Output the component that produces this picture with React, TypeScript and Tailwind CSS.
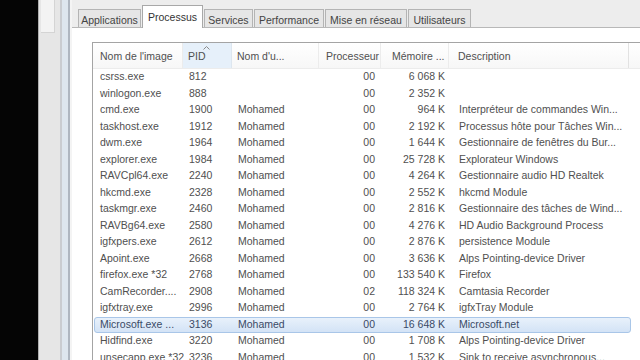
import React from "react";

type Row = { name: string; pid: string; user: string; cpu: string; mem: string; desc: string; sel?: boolean };

const rows: Row[] = [
  { name: "csrss.exe", pid: "812", user: "", cpu: "00", mem: "6 068 K", desc: "" },
  { name: "winlogon.exe", pid: "888", user: "", cpu: "00", mem: "2 352 K", desc: "" },
  { name: "cmd.exe", pid: "1900", user: "Mohamed", cpu: "00", mem: "964 K", desc: "Interpréteur de commandes Win..." },
  { name: "taskhost.exe", pid: "1912", user: "Mohamed", cpu: "00", mem: "2 192 K", desc: "Processus hôte pour Tâches Win..." },
  { name: "dwm.exe", pid: "1964", user: "Mohamed", cpu: "00", mem: "1 644 K", desc: "Gestionnaire de fenêtres du Bur..." },
  { name: "explorer.exe", pid: "1984", user: "Mohamed", cpu: "00", mem: "25 728 K", desc: "Explorateur Windows" },
  { name: "RAVCpl64.exe", pid: "2240", user: "Mohamed", cpu: "00", mem: "4 264 K", desc: "Gestionnaire audio HD Realtek" },
  { name: "hkcmd.exe", pid: "2328", user: "Mohamed", cpu: "00", mem: "2 552 K", desc: "hkcmd Module" },
  { name: "taskmgr.exe", pid: "2460", user: "Mohamed", cpu: "00", mem: "2 816 K", desc: "Gestionnaire des tâches de Wind..." },
  { name: "RAVBg64.exe", pid: "2580", user: "Mohamed", cpu: "00", mem: "4 276 K", desc: "HD Audio Background Process" },
  { name: "igfxpers.exe", pid: "2612", user: "Mohamed", cpu: "00", mem: "2 876 K", desc: "persistence Module" },
  { name: "Apoint.exe", pid: "2668", user: "Mohamed", cpu: "00", mem: "3 636 K", desc: "Alps Pointing-device Driver" },
  { name: "firefox.exe *32", pid: "2768", user: "Mohamed", cpu: "00", mem: "133 540 K", desc: "Firefox" },
  { name: "CamRecorder....", pid: "2908", user: "Mohamed", cpu: "02", mem: "118 324 K", desc: "Camtasia Recorder" },
  { name: "igfxtray.exe", pid: "2996", user: "Mohamed", cpu: "00", mem: "2 764 K", desc: "igfxTray Module" },
  { name: "Microsoft.exe ...", pid: "3136", user: "Mohamed", cpu: "00", mem: "16 648 K", desc: "Microsoft.net", sel: true },
  { name: "Hidfind.exe", pid: "3220", user: "Mohamed", cpu: "00", mem: "1 708 K", desc: "Alps Pointing-device Driver" },
  { name: "unsecapp.exe *32", pid: "3236", user: "Mohamed", cpu: "00", mem: "1 532 K", desc: "Sink to receive asynchronous..." },
];

const tabs: { label: string; w: string }[] = [
  { label: "Applications", w: "w-[63px]" },
  { label: "Processus", w: "w-[61px]" },
  { label: "Services", w: "w-[49px]" },
  { label: "Performance", w: "w-[70px]" },
  { label: "Mise en réseau", w: "w-[82px]" },
  { label: "Utilisateurs", w: "w-[63px]" },
];

export default function App() {
  return (
    <div
      className="w-[640px] h-[360px] flex overflow-hidden bg-black text-[10.5px] text-[#505050]"
      style={{ fontFamily: '"Liberation Sans", Arial, sans-serif' }}
    >
      {/* dark left */}
      <div className="w-[38px] shrink-0 bg-[#050505]" />
      {/* gray strip */}
      <div className="w-[22px] shrink-0 bg-[#e6e6e6] border-l border-[#b0b0b0] flex flex-col">
        <div className="ml-[2px] w-[14px] h-[33px] bg-[#f3f3f3] border-r border-b border-[#d4d4d4]" />
      </div>
      {/* window border */}
      <div className="w-[12px] shrink-0 flex">
        <div className="w-[2px] bg-[#c9ccd0]" />
        <div className="w-[6px] bg-[#dde6ee]" />
        <div className="w-[2px] bg-[#aeb6c0]" />
        <div className="w-[2px] bg-[#f4f4f4]" />
      </div>
      {/* main */}
      <div className="flex-1 flex flex-col bg-[#ededed] min-w-0">
        {/* tabs */}
        <div className="h-[28px] shrink-0 flex items-end pl-[6px] border-b border-[#b8b8b8]">
          {tabs.map((t) =>
            t.label === "Processus" ? (
              <div
                key={t.label}
                className={t.w + " h-[23px] -mb-[1px] mr-[1px] pt-[4px] text-center bg-white border border-b-0 border-[#a8a8a8] text-[#333] relative z-10"}
              >
                {t.label}
              </div>
            ) : (
              <div
                key={t.label}
                className={t.w + " h-[18px] mr-[1px] pt-[3px] text-center bg-[#e6e6e6] border border-b-0 border-[#b4b4b4] text-[#444]"}
              >
                {t.label}
              </div>
            )
          )}
        </div>
        {/* panel */}
        <div className="flex-1 bg-white pl-[20px] pt-[14px] min-h-0">
          <div className="h-full border-l border-t border-[#a4a4a4] flex flex-col overflow-hidden">
            {/* header */}
            <div className="h-[26px] shrink-0 flex items-center border-b border-[#ececec] bg-gradient-to-b from-white to-[#f7f7f7]">
              <div className="w-[90px] pl-[7px] pt-[2px] h-full flex items-center border-r border-[#ececec]">Nom de l'image</div>
              <div className="w-[49px] pl-[5px] pt-[2px] h-full flex items-center bg-[#e6f0fa] border-r border-[#dde6ef] relative">
                PID
                <svg className="absolute left-[20px] top-[3px]" width="7" height="4" viewBox="0 0 7 4">
                  <path d="M0.5 3.5 L3.5 0.5 L6.5 3.5" fill="none" stroke="#8a8a8a" strokeWidth="1" />
                </svg>
              </div>
              <div className="w-[87px] pl-[5px] pt-[2px] h-full flex items-center border-r border-[#ececec]">Nom d'u...</div>
              <div className="w-[62px] pl-[7px] pt-[2px] h-full flex items-center border-r border-[#ececec]">Processeur</div>
              <div className="w-[68px] pl-[11px] pt-[2px] h-full flex items-center border-r border-[#ececec]">Mémoire ...</div>
              <div className="w-[180px] pl-[9px] pt-[2px] h-full flex items-center border-r border-[#e2e2e2]">Description</div>
              <div className="flex-1" />
            </div>
            {/* rows */}
            <div className="flex flex-col">
              {rows.map((r, i) => (
                <div
                  key={i}
                  className={
                    "h-[16.5px] shrink-0 flex items-center w-[537px] ml-[1px] " +
                    (r.sel
                      ? "bg-gradient-to-b from-[#e8f1fb] to-[#d3e3f6] border border-[#a9c6e8] rounded-[3px] text-[#3a4a66]"
                      : "border border-transparent")
                  }
                >
                  <div className="w-[89px] pl-[5px] whitespace-nowrap overflow-hidden">{r.name}</div>
                  <div className="w-[49px] pl-[5px]">{r.pid}</div>
                  <div className="w-[87px] pl-[5px]">{r.user}</div>
                  <div className="w-[62px] pr-[7px] text-right">{r.cpu}</div>
                  <div className="w-[68px] pr-[5px] text-right whitespace-nowrap">{r.mem}</div>
                  <div className="w-[180px] pl-[9px] whitespace-nowrap overflow-hidden">{r.desc}</div>
                </div>
              ))}
            </div>
          </div>
        </div>
      </div>
    </div>
  );
}
